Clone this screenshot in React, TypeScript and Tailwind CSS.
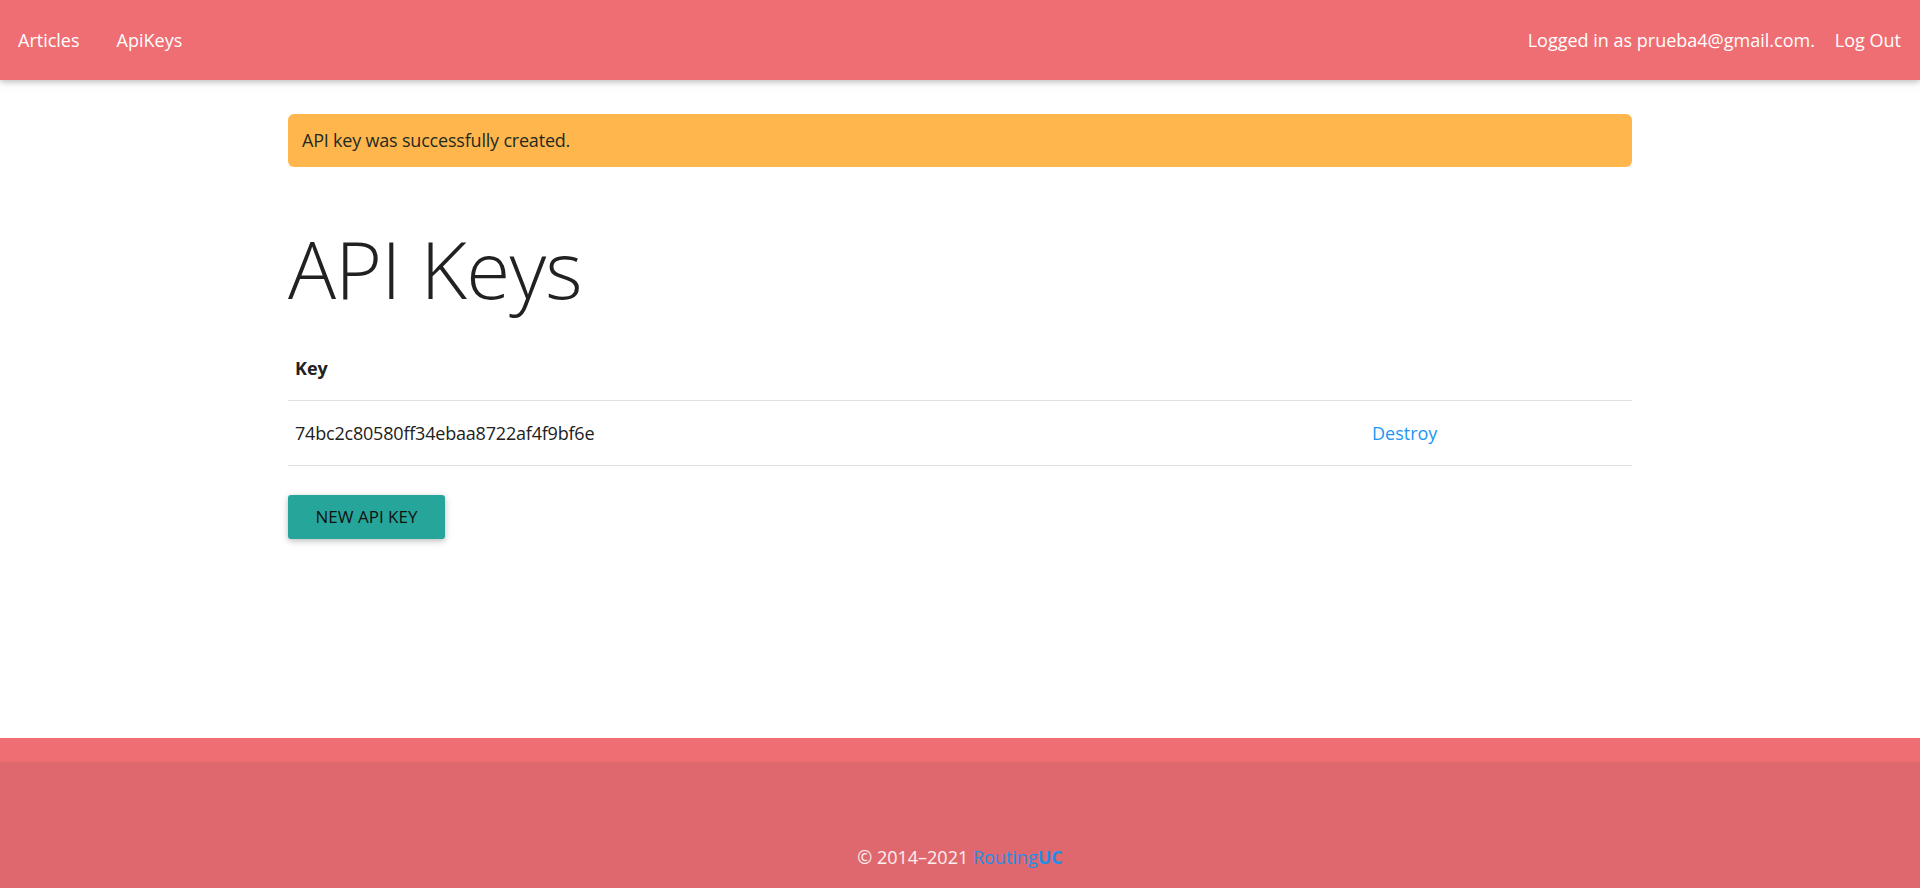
import React from "react";

const font = { fontFamily: '"Open Sans", "Noto Sans", Arial, sans-serif' };

function NavBar() {
  return (
    <nav className="h-[80px] bg-[#EF6E73] shadow-[0_2px_5px_rgba(0,0,0,0.16),0_2px_10px_rgba(0,0,0,0.12)] flex items-center justify-between px-[18px] text-white text-[18px] relative z-10">
      <div className="flex items-center gap-[37px]">
        <a>Articles</a>
        <a>ApiKeys</a>
      </div>
      <div className="flex items-center gap-[20px] pr-[1px]">
        <span>Logged in as prueba4@gmail.com.</span>
        <a>Log Out</a>
      </div>
    </nav>
  );
}

function Footer() {
  return (
    <footer className="bg-[#EF6E73]">
      <div className="h-[24px]" />
      <div className="bg-[#DF686E] h-[150px] flex justify-center pt-[82px] text-[18px] text-white/90">
        <span>
          © 2014–2021 <a className="text-[#1E90E8]">Routing<b className="font-bold">UC</b></a>
        </span>
      </div>
    </footer>
  );
}

export default function App() {
  return (
    <div className="min-h-screen bg-white text-[#212121]" style={font}>
      <NavBar />
      <main className="h-[658px] w-[70%] mx-auto pt-[34px]">
        {/* flash message */}
        <div className="h-[53px] rounded-[6px] bg-[#FFB74D] flex items-center px-[14px] text-[18px] tracking-[-0.2px] text-[#1f2a22]">
          API key was successfully created.
        </div>

        <h1 className="mt-[53px] text-[80px] font-light leading-[96px] tracking-[-0.8px] text-[#212121]">
          API Keys
        </h1>

        <div className="mt-[21px] text-[18px]">
          <div className="h-[64px] flex items-center border-b border-[#e0e0e0]">
            <div className="w-[1077px] pl-[7px] font-bold">Key</div>
            <div />
          </div>
          <div className="h-[65px] flex items-center border-b border-[#e0e0e0]">
            <div className="w-[1077px] pl-[7px] tracking-[-0.2px]">74bc2c80580ff34ebaa8722af4f9bf6e</div>
            <a className="pl-[7px] text-[#2196F3]">Destroy</a>
          </div>
        </div>

        <button className="mt-[29px] h-[44px] w-[157px] rounded-[3px] bg-[#26A69A] text-[17px] uppercase text-[#111] shadow-[0_2px_5px_rgba(0,0,0,0.16),0_2px_10px_rgba(0,0,0,0.12)]">
          New API Key
        </button>
      </main>
      <Footer />
    </div>
  );
}
